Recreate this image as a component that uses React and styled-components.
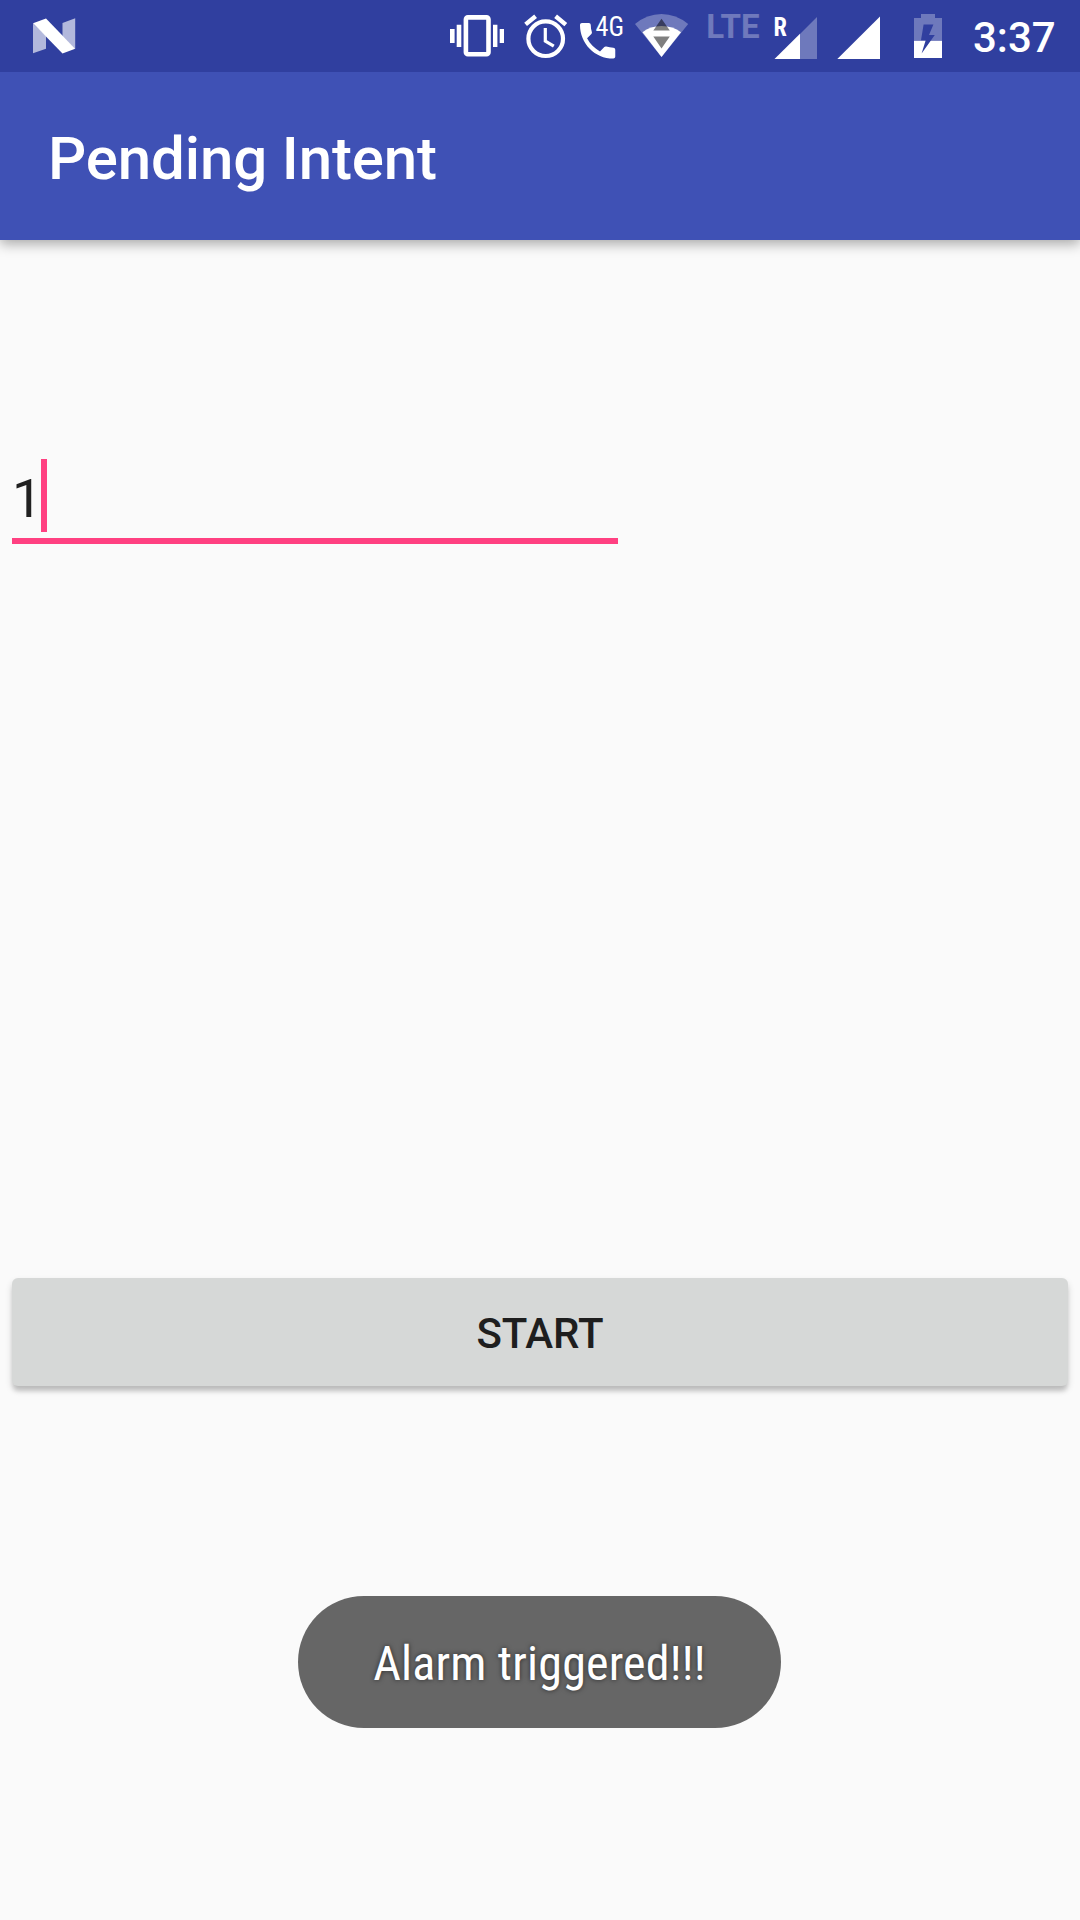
import React from "react";
import styled, { createGlobalStyle } from "styled-components";

const GlobalStyle = createGlobalStyle`
  * { box-sizing: border-box; }
  body { margin: 0; background: #fafafa; font-family: Roboto, "Noto Sans", sans-serif; }
`;

const Screen = styled.div`
  width: 1080px;
  height: 1920px;
  display: flex;
  flex-direction: column;
  background: #fafafa;
  overflow: hidden;
`;

const StatusBar = styled.header`
  height: 72px;
  flex: none;
  display: flex;
  align-items: center;
  justify-content: space-between;
  padding: 0 23px 0 24px;
  background: #303f9f;
  color: #fff;
`;

const IconGroup = styled.div`
  display: flex;
  align-items: center;
`;

const Icon = styled.svg`
  display: block;
  flex: none;
  fill: #fff;
  overflow: visible;
  font-family: "Roboto Condensed", Roboto, sans-serif;
  font-stretch: 75%;
`;

const WideText = styled.text`
  font-family: Roboto, sans-serif;
  font-stretch: 100%;
  font-weight: 700;
`;

const Clock = styled.time`
  width: 84px;
  margin-left: 23px;
  font-size: 42px;
  line-height: 72px;
  padding-top: 3px;
  font-weight: 500;
  white-space: nowrap;
`;

const AppBar = styled.div`
  height: 168px;
  flex: none;
  display: flex;
  align-items: center;
  padding: 5px 48px 0;
  background: #3f51b5;
  box-shadow: 0 4px 12px rgba(0, 0, 0, 0.33);
  clip-path: inset(0 0 -24px 0);
`;

const Title = styled.h1`
  margin: 0;
  color: #fff;
  font-size: 60px;
  line-height: 70px;
  font-weight: 500;
  letter-spacing: -0.13px;
`;

const Content = styled.main`
  flex: 1;
  display: flex;
  flex-direction: column;
  align-items: stretch;
  padding: 219px 12px 0;
`;

const Field = styled.div`
  width: 606px;
  height: 85px;
  display: flex;
  align-items: flex-start;
  border-bottom: 6px solid #ff4081;
  color: #212121;
  font-size: 54px;
  line-height: 79px;
`;

const Digits = styled.span`
  width: 29px;
`;

const Caret = styled.span`
  width: 6px;
  height: 73px;
  background: #ff4081;
`;

const StartButton = styled.button`
  height: 108px;
  margin-top: 734px;
  padding: 4px 0 0;
  border: 0;
  border-radius: 6px;
  background: #d6d8d7;
  color: #1e1e1e;
  font: 500 42px/104px Roboto, sans-serif;
  letter-spacing: -0.1px;
  box-shadow: 0 6px 4px -1px rgba(0, 0, 0, 0.13), 0 4px 7px rgba(0, 0, 0, 0.16);
`;

const Toast = styled.div`
  width: 483px;
  height: 132px;
  margin: 210px 0 0 286px;
  padding-top: 4px;
  display: flex;
  align-items: center;
  justify-content: center;
  border-radius: 66px;
  background: #666;
  color: #fff;
  font-family: "Roboto Condensed", Roboto, sans-serif;
  font-stretch: 75%;
  font-size: 48px;
  line-height: 56px;
  letter-spacing: 0.2px;
  white-space: nowrap;
  text-shadow: 0 0 5px rgba(0, 0, 0, 0.6);
`;

// Every glyph is drawn on the status bar's own pixel grid: `x` is where its slot starts.
function Glyph({ x, w, children }) {
  return (
    <Icon width={w} height={72} viewBox={`${x} 0 ${w} 72`}>
      {children}
    </Icon>
  );
}

function NougatIcon() {
  return (
    <Glyph x={24} w={60}>
      <path d="M33 23.5 46 36V48.7L33 53.3zM62.5 23 75.2 18.3V49L62.5 36z" opacity=".63" />
      <path d="M33 23.3 46 18.5 75.2 48.7 62.5 53.5z" />
    </Glyph>
  );
}

function VibrateIcon() {
  return (
    <Glyph x={440} w={76}>
      <rect x="465.9" y="17.4" width="22.6" height="36.8" rx="2" fill="none" stroke="#fff" strokeWidth="4.6" />
      <path d="M450 29h4.6v14H450zM456.7 24.7h4.6V47h-4.6zM493 24.7h4.4V47H493zM499.7 29h4.3v14h-4.3z" />
    </Glyph>
  );
}

function AlarmIcon() {
  return (
    <Glyph x={516} w={58}>
      <g fill="none" stroke="#fff">
        <circle cx="545.7" cy="38.7" r="17.3" strokeWidth="4.2" />
        <path d="M545.3 28V41l8.5 5.2" strokeWidth="3.2" />
        <path d="M525.6 24.4 535.6 16.2M555.6 16.2 565.8 24.6" strokeWidth="4.4" />
      </g>
    </Glyph>
  );
}

function CallIcon() {
  return (
    <Glyph x={574} w={54}>
      <path
        transform="translate(574.1 17) scale(1.96 1.98)"
        d="M6.62 10.79c1.44 2.83 3.76 5.14 6.59 6.59l2.2-2.2c.27-.27.67-.36 1.02-.24 1.12.37 2.33.57 3.57.57.55 0 1 .45 1 1V20c0 .55-.45 1-1 1-9.39 0-17-7.61-17-17 0-.55.45-1 1-1h3.5c.55 0 1 .45 1 1 0 1.25.2 2.45.57 3.57.11.35.03.74-.25 1.02l-2.2 2.2z"
      />
      <text x="595.5" y="36" fontSize="27" textLength="28.5" lengthAdjust="spacingAndGlyphs">4G</text>
    </Glyph>
  );
}

function WifiIcon() {
  return (
    <Glyph x={628} w={68}>
      <path d="M635 24Q647 14 661.5 14T688.2 24L661.5 57z" opacity=".3" />
      <path d="M642.5 32.3Q650 26 661.5 26T681 32.3L661.5 57z" />
      <path d="M661.5 18.7 669.8 30.4H653.3zM653.3 36.5H669.8L661.5 48.5z" fill="#000" opacity=".5" />
    </Glyph>
  );
}

function LteIcon() {
  return (
    <Glyph x={696} w={72}>
      <WideText x="706.3" y="38" fontSize="32.4" opacity=".3" textLength="53.2" lengthAdjust="spacingAndGlyphs">LTE</WideText>
    </Glyph>
  );
}

function RoamingSignalIcon() {
  return (
    <Glyph x={768} w={60}>
      <path d="M800 34 817 17V59H800z" opacity=".3" />
      <path d="M774.5 59 800 33.7V59z" />
      <text x="773.5" y="35.5" fontSize="25.5" fontWeight="700" textLength="13.4" lengthAdjust="spacingAndGlyphs">R</text>
    </Glyph>
  );
}

function SignalIcon() {
  return (
    <Glyph x={828} w={66}>
      <path d="M837.3 59 880 16.5V59z" />
    </Glyph>
  );
}

function BatteryIcon() {
  return (
    <Glyph x={894} w={56}>
      <path d="M921 14h14v4h7v22.8H914V18h7z" opacity=".3" />
      <path d="M914 40.8h28V58H914z" />
      <path d="M923.6 24.5h9.8L929 35h5.8L921.6 53.5 925.7 40.3H921z" fill="#303f9f" />
    </Glyph>
  );
}

export default function App() {
  return (
    <Screen>
      <GlobalStyle />
      <StatusBar>
        <NougatIcon />
        <IconGroup>
          <VibrateIcon />
          <AlarmIcon />
          <CallIcon />
          <WifiIcon />
          <LteIcon />
          <RoamingSignalIcon />
          <SignalIcon />
          <BatteryIcon />
          <Clock>3:37</Clock>
        </IconGroup>
      </StatusBar>
      <AppBar>
        <Title>Pending Intent</Title>
      </AppBar>
      <Content>
        <Field>
          <Digits>1</Digits>
          <Caret />
        </Field>
        <StartButton type="button">START</StartButton>
        <Toast role="status">Alarm triggered!!!</Toast>
      </Content>
    </Screen>
  );
}
